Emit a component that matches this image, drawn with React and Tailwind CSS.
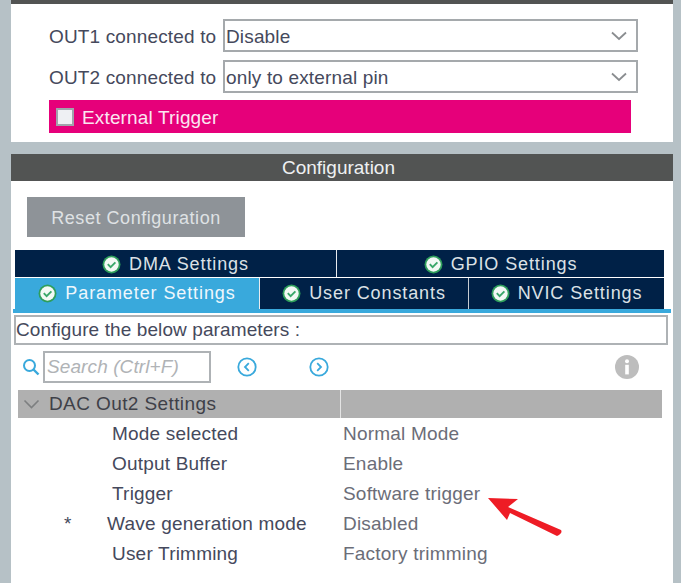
const font = { fontFamily: '"Liberation Sans", Arial, sans-serif' };

function Check() {
  return (
    <svg width="19" height="19" viewBox="0 0 19 19" className="shrink-0">
      <circle cx="9.5" cy="9.5" r="9" fill="#2e9e5b" />
      <circle cx="9.5" cy="9.5" r="7.2" fill="#f3f9f5" />
      <path d="M5.8 9.2l2.8 2.9 4.8-4.8" fill="none" stroke="#3aa76a" strokeWidth="1.9" />
    </svg>
  );
}

function Tab({ label, className }) {
  return (
    <div className={"flex items-center justify-center gap-[8px] text-[18px] tracking-[0.9px] " + className}>
      <Check />
      <span>{label}</span>
    </div>
  );
}

function Select({ label, value }) {
  return (
    <div className="flex items-center h-[33px] text-[19px] tracking-[0.15px] text-[#45495c]">
      <div className="w-[174px] shrink-0 whitespace-nowrap pt-[3px]">{label}</div>
      <div className="w-[415px] h-full border-2 border-[#a5a9ac] bg-white flex items-center justify-between pl-[1px] pr-[9px]">
        <span className="pt-[3px]">{value}</span>
        <svg width="16" height="10" viewBox="0 0 16 10"><path d="M1 1.5l7 6.5 7-6.5" fill="none" stroke="#8a8d90" strokeWidth="1.8" /></svg>
      </div>
    </div>
  );
}

function Row({ star, name, value, wave }) {
  return (
    <div className="flex items-center h-[30px] text-[19px] tracking-[0.2px]">
      <div className="w-[54px] shrink-0 text-[#45495c] pl-[53px]">{star ? <span className="inline-block">*</span> : null}</div>
      <div className={"w-[278px] shrink-0 text-[#45495c] " + (wave ? "pl-[42px]" : "pl-[47px]")}>{name}</div>
      <div className="text-[#6b6d78]">{value}</div>
    </div>
  );
}

export default function App() {
  return (
    <div className="w-[681px] h-[583px] overflow-hidden bg-[#b6c1c6] pl-[11px] pr-[8px]" style={font}>
      <section className="bg-white h-[142px]">
        <div className="h-[4px] bg-[#525453]" />
        <div className="pt-[15px] pl-[38px] flex flex-col gap-[8px]">
          <Select label="OUT1 connected to" value="Disable" />
          <Select label="OUT2 connected to" value="only to external pin" />
          <div className="-mt-[1px] w-[582px] h-[33px] bg-[#e6007a] flex items-center pl-[7px] gap-[8px] text-[19px] tracking-[0.15px] text-[#fbe6f1]">
            <div className="w-[18px] h-[18px] bg-[#eef0f3] border-2 border-[#a0a4ab]" />
            <span className="pt-[3px]">External Trigger</span>
          </div>
        </div>
      </section>

      <section className="mt-[12px] bg-white h-[429px]">
        <div className="h-[27px] bg-[#525453] text-[#eef1f2] text-[19px] flex items-center justify-center pr-[7px] pt-[1px]">Configuration</div>

        <div className="pl-[16px] pt-[16px]">
          <div className="w-[218px] h-[40px] bg-[#8e9398] text-[#dfe2e4] text-[18px] tracking-[0.55px] flex items-center justify-center pt-[3px]">Reset Configuration</div>
        </div>

        <div className="mt-[13px] ml-[4px] w-[649px] bg-white">
          <div className="flex h-[27px] text-[#dce1e6]">
            <Tab label="DMA Settings" className="w-[321px] bg-[#002147] pt-[1px]" />
            <div className="w-[1px] bg-[#e8ebef]" />
            <Tab label="GPIO Settings" className="flex-1 bg-[#002147] pt-[1px]" />
          </div>
          <div className="flex h-[31px] mt-[1px] text-[#dce1e6]">
            <Tab label="Parameter Settings" className="w-[244px] bg-[#39a9dc] text-[#eef7fc]" />
            <div className="w-[1px] bg-[#e8ebef]" />
            <Tab label="User Constants" className="w-[208px] bg-[#002147]" />
            <div className="w-[1px] bg-[#c6ccd2]" />
            <Tab label="NVIC Settings" className="flex-1 bg-[#002147]" />
          </div>
        </div>
        <div className="ml-[2px] w-[658px] h-[4px] bg-[#39a9dc]" />

        <div className="mt-[2px] ml-[3px] w-[654px] h-[30px] border-2 border-[#aeb2b5] text-[19px] text-[#45495c] flex items-center whitespace-nowrap tracking-[0.1px] pt-[1px]">
          Configure the below parameters :
        </div>

        <div className="mt-[6px] h-[32px] flex items-center pl-[11px] pr-[34px]">
          <svg width="18" height="18" viewBox="0 0 18 18" className="shrink-0">
            <circle cx="7.5" cy="7.5" r="5.5" fill="none" stroke="#39a9dc" strokeWidth="2" />
            <path d="M11.5 11.5l5 5" stroke="#39a9dc" strokeWidth="2.4" />
          </svg>
          <div className="ml-[3px] w-[168px] h-[32px] border-2 border-[#aeb2b5] flex items-center pl-[2px] text-[19px] tracking-[0.1px] italic text-[#b0b3b6] whitespace-nowrap">Search (Ctrl+F)</div>
          <svg width="20" height="20" viewBox="0 0 20 20" className="ml-[26px] shrink-0">
            <circle cx="10" cy="10" r="8.7" fill="none" stroke="#39a9dc" strokeWidth="1.8" />
            <path d="M11.8 6.2l-3.8 3.8 3.8 3.8" fill="none" stroke="#39a9dc" strokeWidth="1.8" />
          </svg>
          <svg width="20" height="20" viewBox="0 0 20 20" className="ml-[52px] shrink-0">
            <circle cx="10" cy="10" r="8.7" fill="none" stroke="#39a9dc" strokeWidth="1.8" />
            <path d="M8.2 6.2l3.8 3.8-3.8 3.8" fill="none" stroke="#39a9dc" strokeWidth="1.8" />
          </svg>
          <svg width="24" height="24" viewBox="0 0 24 24" className="ml-auto shrink-0">
            <circle cx="12" cy="12" r="12" fill="#bdbdbd" />
            <circle cx="12" cy="6.2" r="2" fill="#fff" />
            <rect x="10.2" y="9.8" width="3.6" height="9.6" fill="#fff" />
          </svg>
        </div>

        <div className="mt-[7px] ml-[7px] w-[644px] h-[28px] bg-[#b0b0b0] flex items-center text-[19px] tracking-[0.4px] text-[#3e4048]">
          <div className="w-[322px] h-full flex items-center pl-[5px] gap-[9px]">
            <svg width="17" height="10" viewBox="0 0 17 10"><path d="M1.5 1.5l7 7 7-7" fill="none" stroke="#7d7f80" strokeWidth="1.6" /></svg>
            <span>DAC Out2 Settings</span>
          </div>
          <div className="w-[1px] h-full bg-[#e4e4e4]" />
        </div>

        <div className="mt-[1px]">
          <Row name="Mode selected" value="Normal Mode" />
          <Row name="Output Buffer" value="Enable" />
          <Row name="Trigger" value="Software trigger" />
          <Row star wave name="Wave generation mode" value="Disabled" />
          <Row name="User Trimming" value="Factory trimming" />
        </div>
      </section>

      <svg width="78" height="44" viewBox="0 0 78 44" className="absolute left-[486px] top-[495px]">
        <path d="M2 3L32 4 22 12 75 35Q77 38 71 41L24 18 21 25Z" fill="#ee1c25" />
      </svg>
    </div>
  );
}
